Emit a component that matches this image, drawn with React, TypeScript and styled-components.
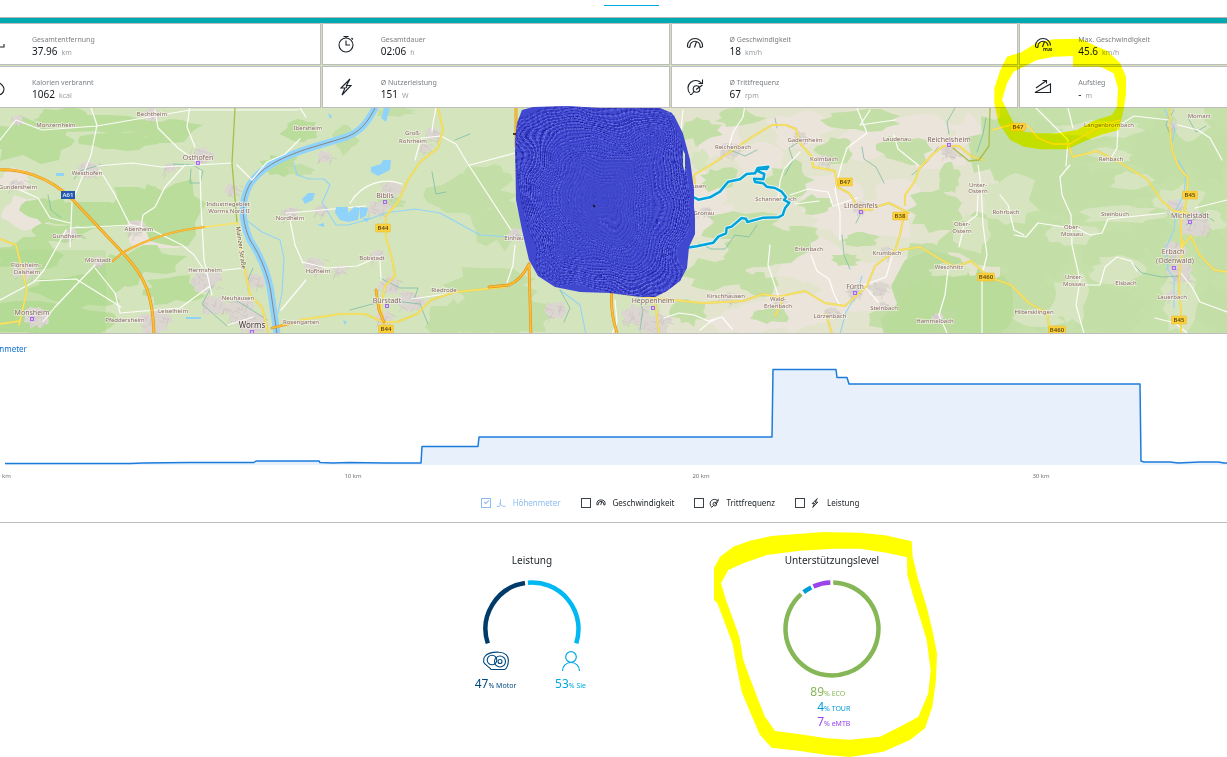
import React from 'react';
import styled, { createGlobalStyle } from 'styled-components';

const GlobalStyle = createGlobalStyle`
  *, *::before, *::after { box-sizing: border-box; }
  body {
    margin: 0;
    background: #fff;
    color: #1c2227;
    font-family: 'Noto Sans', 'Open Sans', sans-serif;
    font-size: 8px;
    line-height: 12px;
    overflow-x: hidden;
  }
`;

const Page = styled.main`
  position: relative;
  min-height: 100vh;
  overflow: hidden;
`;

const Wide = styled.div`
  margin: 0 -140px 0 -27px;
`;

const Header = styled.header`
  display: flex;
  justify-content: center;
  height: 17px;
  padding: 5px 0 0 36px;
`;

const ActiveTab = styled.span`
  width: 55px;
  height: 1px;
  background: #00a8e0;
`;

const TealBar = styled.div`
  height: 6px;
  border-top: 1px solid #b5b5b5;
  background: #00a8b0;
`;

const StatGrid = styled.dl`
  display: grid;
  grid-template-columns: repeat(4, 1fr);
  gap: 1px;
  margin: 0;
  background: #d3e2bd;
`;

const StatTile = styled.div`
  display: flex;
  align-items: center;
  gap: 26px;
  height: 42px;
  padding: 0 14px;
  border: 1px solid #bdbdbd;
  background: #fff;
`;

const StatText = styled.div`
  display: flex;
  flex-direction: column;
  padding-top: 5px;
`;

const StatLabel = styled.dt`
  font-size: 7px;
  line-height: 10px;
  color: #7c8085;
`;

const StatValue = styled.dd`
  margin: 0;
  font-size: 10px;
  line-height: 12px;
  color: #14181c;
`;

const Unit = styled.span`
  margin-left: 4px;
  font-size: 7px;
  color: #9a9ea2;
`;

const MapPanel = styled.section`
  height: 226px;
  border-bottom: 1px solid #bdbdbd;
  background: #d4e5be;
`;

const Drawing = styled.svg`
  display: block;
  width: 100%;
  height: 100%;
`;

const ChartPanel = styled.section`
  border-bottom: 1px solid #bdbdbd;
  padding: 9px 0 13px;
`;

const ChartName = styled.h2`
  margin: 0 0 0 -21px;
  font-size: 8px;
  font-weight: 400;
  line-height: 12px;
  color: #0f6fd1;
`;

const ChartPlot = styled.div`
  height: 128px;
  overflow: hidden;
`;

const Legend = styled.div`
  display: flex;
  justify-content: center;
  gap: 20px;
  margin-top: 14px;
`;

const LegendItem = styled.label<{ $active?: boolean }>`
  display: flex;
  align-items: center;
  color: ${(p) => (p.$active ? '#8dbdf0' : '#1c2227')};
  line-height: 12px;
  svg { margin: 0 7px 0 5px; }
`;

const Check = styled.input`
  appearance: none;
  position: relative;
  width: 10px;
  height: 10px;
  margin: 0;
  border: 1px solid #3a4248;
  background: #fff;
  &:checked { border-color: #8dbdf0; }
  &:checked::after {
    content: '';
    position: absolute;
    left: 2px;
    top: 1px;
    width: 5px;
    height: 3px;
    border: solid #8dbdf0;
    border-width: 0 0 1px 1px;
    transform: rotate(-45deg);
  }
`;

const Rings = styled.section`
  display: flex;
  justify-content: center;
  padding: 31px 0 30px 24px;
`;

const RingCard = styled.article`
  display: flex;
  flex-direction: column;
  align-items: center;
  width: 300px;
`;

const RingTitle = styled.h3`
  margin: 0 0 14px;
  font-size: 10px;
  font-weight: 400;
  line-height: 12px;
`;

const Sources = styled.div`
  display: flex;
  margin-top: -27px;
  padding-left: 2px;
`;

const Source = styled.div<{ $color: string }>`
  display: flex;
  flex-direction: column;
  align-items: center;
  gap: 5px;
  width: 75px;
  color: ${(p) => p.$color};
`;

const Share = styled.span`
  font-size: 12px;
  line-height: 16px;
  white-space: nowrap;
`;

const Small = styled.small`
  font-size: 7px;
`;

const Levels = styled.ul`
  width: 100px;
  margin: 6px 0 0;
  padding: 0;
  list-style: none;
`;

const Level = styled.li<{ $color: string }>`
  display: grid;
  grid-template-columns: 42px 1fr;
  align-items: baseline;
  height: 15px;
  color: ${(p) => p.$color};
  font-size: 12px;
  line-height: 15px;
  span:first-child { text-align: right; }
`;

const Annotation = styled.svg<{ $multiply?: boolean }>`
  position: absolute;
  left: 0;
  top: 0;
  width: 100%;
  height: 757px;
  pointer-events: none;
  mix-blend-mode: ${(p) => (p.$multiply ? 'multiply' : 'normal')};
`;

/* ---------- icons ---------- */

type IconName = 'distance' | 'clock' | 'speed' | 'maxSpeed' | 'flame' | 'bolt' | 'cadence' | 'ascent' | 'height';

const Gauge = () => (
  <path d="M1.500 12V10.500a7.500 7 0 0 1 15 0V12M4 12.500V11a5 4.800 0 0 1 10 0v1.500M8.500 12.500l2-6M1.500 12l2.500.5M14 12.500l2.500-.5" />
);

const icons: Record<IconName, React.ReactNode> = {
  distance: <path d="M2 12h3V8M9 12h7V9M3 5h5" />,
  clock: (
    <>
      <circle cx="9" cy="10" r="7" />
      <path d="M9 5.500V10h4M6.500 1.500h5M9 1.500V3M14.500 3l1.500 1.500" />
    </>
  ),
  speed: <Gauge />,
  maxSpeed: (
    <>
      <path d="M1.500 12V10.500a7.500 7 0 0 1 15 0M4 12.500V11a5 4.800 0 0 1 10 0M8.500 12l2-5.500M1.500 12l2.500.5" />
      <text x="9" y="16" fontSize="5" fontWeight="700" fill="currentColor" stroke="none">max</text>
    </>
  ),
  flame: <path d="M9 1c1 4 7 6 7 10a6 6 0 0 1-12 0c0-2 1-3 2-4 0 2 1 3 2 3 1-3 0-6 1-9Z" />,
  bolt: <path d="M13 1 4 10h4L5 17l9-9.500h-4.500L13 1ZM9 10l1-2" />,
  cadence: (
    <>
      <path d="M4 15.500A7.700 7.700 0 1 1 15.500 5M16.500 1.500V5.500h-4" />
      <circle cx="10.500" cy="11" r="3.300" />
      <path d="M8 13.500l-2.500 3H4M10 11.500 16.500 7" />
    </>
  ),
  ascent: <path d="M1 14.500h15.500V6L1 14.500ZM2 10l10.500-7.500M8.500 2.500h4v3" />,
  height: <path d="M1 15h5l2-4V2M8 11l2 3h2l1 1h4M6 9l2 2" />,
};

const Icon = ({ name, size = 18 }: { name: IconName; size?: number }) => (
  <svg
    width={size}
    height={size}
    viewBox="0 0 18 18"
    fill="none"
    stroke="currentColor"
    strokeWidth={size > 12 ? 1.1 : 1.6}
    aria-hidden="true"
  >
    {icons[name]}
  </svg>
);

const MotorIcon = () => (
  <svg width="26" height="20" viewBox="0 0 26 20" fill="none" stroke="currentColor" strokeWidth="1.100" aria-hidden="true">
    <path d="M1.500 6C4 2 10 1 16 1.200C22 1.200 25.500 5 25.400 9.500C25.300 13 24 18 21.500 18.500H8C6 15.500 2 14 .8 11.500C.5 9 .8 7 1.500 6Z" />
    <circle cx="9" cy="9" r="4.800" />
    <circle cx="17" cy="10.500" r="5.500" />
    <circle cx="17" cy="10.500" r="2" />
  </svg>
);

const RiderIcon = () => (
  <svg width="20" height="20" viewBox="0 0 20 20" fill="none" stroke="currentColor" strokeWidth="1.200" aria-hidden="true">
    <circle cx="10" cy="6" r="5.300" />
    <path d="M1.500 20c0-5 3.500-8.500 8.500-8.500s8.500 3.500 8.500 8.500" />
  </svg>
);

/* ---------- map ---------- */

const seeded = (seed: number) => () => {
  seed = (seed * 16807 + 11) % 2147483647;
  return seed / 2147483647;
};

const blobPath = (cx: number, cy: number, rx: number, ry: number, seed: number) => {
  const rnd = seeded(seed * 7919 + 3);
  rnd();
  const n = 18;
  let d = '';
  for (let i = 0; i < n; i++) {
    const a = (i / n) * Math.PI * 2;
    const k = 0.6 + rnd() * 0.5;
    d += `${i ? 'L' : 'M'}${Math.round(cx + Math.cos(a) * rx * k)} ${Math.round(cy + Math.sin(a) * ry * k)}`;
  }
  return d + 'Z';
};

type Blob = [number, number, number, number];

const Blobs = ({ items, fill, seed = 1 }: { items: Blob[]; fill: string; seed?: number }) => (
  <>
    {items.map(([x, y, rx, ry], i) => (
      <path key={i} d={blobPath(x, y, rx, ry, seed + i)} fill={fill} />
    ))}
  </>
);

const Town = ({ x, y, r, seed }: { x: number; y: number; r: number; seed: number }) => {
  const rnd = seeded(seed * 104729 + 5);
  rnd();
  let streets = '';
  for (let i = 0; i < r; i++) {
    const px = x + (rnd() - 0.5) * r * 1.5;
    const py = y + (rnd() - 0.5) * r * 1.1;
    const flip = rnd() > 0.5;
    const len = 3 + rnd() * 4;
    streets += `M${px.toFixed(1)} ${py.toFixed(1)}l${flip ? len.toFixed(1) : '-2'} ${flip ? '2' : len.toFixed(1)}`;
  }
  return (
    <g>
      <path d={blobPath(x, y, r * 0.9, r * 0.7, seed)} fill="#dcd6d0" />
      <path d={streets} fill="none" stroke="#c9c1c0" strokeWidth=".6" />
    </g>
  );
};

const darkForest: Blob[] = [
  [30, 140, 60, 24], [62, 117, 36, 9], [100, 124, 60, 10], [165, 130, 40, 14], [120, 140, 40, 12], [100, 215, 60, 14],
  [168, 215, 44, 38], [48, 210, 30, 14], [30, 255, 40, 18], [80, 290, 60, 20], [50, 320, 70, 22], [150, 262, 36, 16],
  [172, 290, 34, 16], [115, 272, 30, 20], [60, 232, 34, 10], [280, 165, 22, 12], [300, 130, 20, 12], [135, 200, 26, 20],
];
const midForest: Blob[] = [
  [470, 195, 50, 22], [500, 225, 30, 26], [490, 285, 54, 20], [500, 315, 60, 26], [450, 320, 24, 20], [300, 170, 14, 7],
  [390, 203, 18, 6], [395, 112, 22, 6], [345, 140, 14, 16], [490, 180, 26, 20], [700, 130, 24, 16], [740, 118, 26, 10],
  [720, 180, 22, 14], [740, 225, 46, 16], [760, 250, 52, 26], [720, 275, 40, 18], [690, 312, 20, 14], [760, 285, 20, 12],
  [860, 120, 40, 12], [835, 150, 22, 14], [905, 150, 30, 16], [935, 210, 30, 22], [985, 240, 50, 30], [930, 260, 26, 26],
  [1000, 150, 34, 36], [1040, 180, 50, 40], [1060, 140, 60, 26], [1110, 190, 52, 22], [1165, 150, 40, 36], [1210, 150, 26, 40],
  [1040, 250, 40, 36], [1020, 300, 46, 40], [1110, 250, 40, 24], [1110, 310, 44, 28], [1150, 230, 26, 30], [1215, 250, 22, 26],
  [1215, 310, 30, 26], [790, 180, 26, 20], [800, 235, 22, 10], [815, 205, 18, 10], [900, 320, 30, 16], [945, 300, 36, 34],
  [985, 320, 40, 24], [1080, 205, 30, 16], [860, 240, 20, 8], [845, 260, 16, 8], [770, 315, 20, 10], [950, 180, 12, 18],
];
const deepForest: Blob[] = [[925, 305, 30, 30], [960, 290, 34, 26], [985, 310, 36, 40], [905, 325, 24, 18]];
const fields: Blob[] = [
  [700, 200, 26, 40], [720, 140, 26, 22], [760, 160, 30, 18], [800, 130, 34, 24], [870, 140, 44, 22], [935, 150, 40, 24],
  [830, 190, 34, 20], [860, 220, 60, 26], [900, 200, 34, 20], [810, 260, 46, 26], [860, 290, 60, 34], [800, 310, 50, 26],
  [750, 320, 40, 20], [720, 215, 26, 12], [900, 270, 34, 20], [920, 125, 44, 12], [970, 130, 14, 18], [30, 212, 30, 18],
  [160, 240, 34, 9], [15, 180, 20, 12],
];
const pale: Blob[] = [
  [1010, 200, 30, 28], [970, 235, 22, 22], [1070, 235, 32, 12], [1120, 215, 46, 10], [1100, 130, 50, 10], [1070, 300, 22, 30],
  [1115, 270, 30, 14], [1180, 300, 22, 34], [1190, 120, 20, 20], [1130, 180, 24, 10], [1180, 200, 26, 18], [1040, 318, 26, 10],
  [950, 270, 22, 8], [700, 160, 10, 12], [1210, 220, 18, 12], [1110, 155, 24, 8],
];
const towns: [number, number, number][] = [
  [90, 170, 14], [202, 156, 14], [170, 168, 8], [17, 185, 9], [70, 235, 9], [135, 228, 12], [98, 262, 9], [25, 270, 14], [38, 318, 16],
  [205, 280, 18], [215, 305, 16], [240, 310, 20], [155, 322, 20], [255, 322, 18], [232, 190, 10], [255, 280, 12], [290, 213, 10],
  [433, 135, 10], [425, 148, 8], [392, 190, 14], [378, 208, 14], [322, 210, 9], [315, 266, 13], [340, 270, 8], [378, 255, 9],
  [390, 285, 14], [410, 300, 16], [385, 318, 10], [515, 235, 10], [555, 310, 14], [635, 315, 18], [655, 325, 20], [730, 150, 12],
  [705, 212, 8], [727, 298, 9], [660, 270, 10], [800, 137, 9], [825, 160, 8], [860, 207, 9], [950, 152, 12], [885, 252, 8],
  [855, 292, 10], [878, 288, 12], [832, 312, 9], [884, 306, 6], [938, 318, 8], [1175, 205, 10], [1196, 225, 20], [1180, 272, 18],
  [1175, 250, 14], [1172, 295, 7], [1172, 125, 7], [779, 303, 7], [325, 156, 9], [18, 120, 8], [152, 114, 10],
];

const whiteRoads = [
  'M0 140L16 120L42 130L97 126L190 110L298 110M90 105l7 20-6 30-10 25-9 22-2 45M97 166l35-3 30 4 70-4M155 110l3 18 20 20 22 16M100 170l15 25 15 30M185 165l-20 22-10 20-12 8-2 12',
  'M20 190l18 8 12 20 20 5M70 228l62-3 20 5 30 15 12 10 12 18M200 170l1 35 3 55 8 35M190 105l-3 22 8 20M66 230l-22 40-10 12M34 281l42-2 45 28M95 265l-40 42-12 15M95 268l20 25 5 20M120 313l60-5 30-22M205 272l40-4M0 300l34-18',
  'M237 165l15 15 15-18 18-8 15-15M290 220l5 25 8 18M286 213l25-2 55-5M350 203c12-20 35-26 52-19M302 262l25 6 30-2 24-10M281 310l25-30M298 105l8 12M436 108l-3 15-1 8M415 160l6-22 20-2 15 8 12 20 43 66M470 165l45-12M515 245l-2 20-6 18M412 299l40-6M380 260l1 20',
  'M745 105l-2 12-10 15-4 15M683 110l-2 20-1 30M800 152l-16 17-4 12-2 18M857 108l10 25-20 15-6 18-6 24 5 22v28M790 195l18-6 20 3 5 14 24-8M894 135l4 14 20 16M870 110l-10 15 35-5',
  'M811 255l6 16 12 8 5 15 6 12M864 285l22-8 6-20M866 288l12 14M795 204l24-3M948 270l-3 25-6 20 8 18M978 195l-1 20-13 10-5 22M1000 195l8 10 6 25 10 5M978 165l3 20 2 40 4 30-5 20v60',
  'M1014 235l12 2 12-14 40 6 12 6 12-2 6-14 58-6M1070 165l-10 12 2 18 9 20 1 30 8 35-4 25 14 50M1072 285h28l5-18 12-10 14 4 6 10M1036 108l10 10 22 22-2 26M1068 108l5 20M1110 160l7-12 1-22 16-10 35 4M1178 125l20 5 12 8 12 22',
  'M1195 208l32-8M1180 272l12 15 8 15 27 10M1155 318l20 5 12 10M664 318l15-5 15 2 14 6 14-4 10 12M770 245l-2 20 5 15 5 15M700 330l10-8 8-4M615 300l2 22-5 12M228 325l25-8',
];
const yellowRoads = [
  'M0 239l16 6 5 20 6 25-8 35M242 255l8 40 12 12 6 25M438 108l5 22-5 18-18 14-12 18-10 22-12 14v22l6 20 3 18-10 10-4 22 3 16 6 10M300 320l40-6 25 0 18 8 14 0 20-8 14-14 24-8 50-5',
  'M695 185l-1-10 20-12 20-14 18-12 20-12 14 0 10 4 4 14 12 14 1 10 12 2 10 2 2 16 12 6 12 18 8-2 20-6 20 10M860 207l12 3',
  'M905 205l0-10 10-14 4-12 14-15 10-8 16 0 12 10 12 4M992 130l22-6 14 2 10 12 14 6 18 0 30-18 20-6M903 220l-3 15-5 16-20 15-8 20-22 20-20-3-20-12-28 6M900 250l20-3 20 12 15 8 16-6 18 16 22 8 18 18 18 10 3 20',
  'M1068 145l5 12 24-6 20 10 30 18 15 22 12 10 14 2M1170 105v25l2 20 6 16 10 12-2 25-5 20v25l10-12 8 18 15 16 15 2M1183 240l-3 25-1 25 2 20 0 24M610 290l15 4 28 4 20 2 30 3 40-2 20-7 20 4-8 18M655 300l4 33M0 324l20-3',
  'M826 314l6 20',
];
const streams = [
  'M100 165l-20 6-6 8M173 164l20 1 10 6-3 12-10 0 1-14M48 195l3 15 10 8M212 286l-10 18 25 22M232 298l20 12 15 10M253 268l-6 14M455 140l15-6M432 172l4 22 10-2M380 278l20 10 18 0-4 12M385 300l35 4 8 20M350 310l30-8M560 290l10 18-6 14',
  'M730 150l15 6 12-6M757 225l-8 12-14-2-10 14-14 0-12-6M785 175l8-15-4-12 10-6M775 118l2 10M862 147l2 12 12 8 8 16M912 175l14-12 12-16M955 108l-8 14 2 12M986 118l-3 16-6 18M842 235l2 20 6 14M856 223l6-12M1134 265l8 8 20 4 18-1',
  'M1174 110l-8 14 6 16M1188 118l8 14 10-6M1185 215l6 10M1186 225l16-12 12 8M635 290l8 20-3 20',
];
const creeks = [
  'M246 220l16 12 18 8 4 18-2 35-4 20M294 163l3 12 12 4 15 0 6 6-8 18 14 22 12 0 22-6 15-6 30-4 25 4 40 22 30 2 18 0M560 290l20 15 6 30M840 334l6-22 10-16 6-20M1178 160l8 14-2 20-8 16-2 20-8 18 2 22 6 8 0 30M1165 110l10 20-4 16',
];
const rhine =
  'M376 106C368 122 360 134 340 139L310 148C285 156 262 166 250 184C240 202 242 222 250 240C262 258 270 280 272 300L278 340';

interface MapLabel { x: number; y: number; t: string; s?: number; c?: string; r?: number }
const labels: MapLabel[] = [
  { x: 152, y: 116, t: 'Bechtheim' }, { x: 56, y: 127, t: 'Monzernheim' }, { x: 198, y: 160, t: 'Osthofen', s: 7 },
  { x: 87, y: 175, t: 'Westhofen' }, { x: 18, y: 189, t: 'Gundersheim' }, { x: 228, y: 206, t: 'Industriegebiet' },
  { x: 229, y: 213, t: 'Worms Nord II' }, { x: 290, y: 220, t: 'Nordheim' }, { x: 67, y: 238, t: 'Gundheim' },
  { x: 139, y: 231, t: 'Abenheim' }, { x: 98, y: 262, t: 'Mörstadt' }, { x: 26, y: 267, t: 'Flörsheim-' },
  { x: 27, y: 274, t: 'Dalsheim' }, { x: 205, y: 272, t: 'Herrnsheim' }, { x: 32, y: 315, t: 'Monsheim', s: 7 },
  { x: 125, y: 322, t: 'Pfeddersheim' }, { x: 173, y: 313, t: 'Leiselheim' }, { x: 238, y: 300, t: 'Neuhausen' },
  { x: 252, y: 328, t: 'Worms', s: 8, c: '#463c3c' }, { x: 301, y: 324, t: 'Rosengarten' },
  { x: 239, y: 248, t: 'Mainzer Straße', c: '#5b5530', r: 82 },
  { x: 308, y: 130, t: 'Ibersheim' }, { x: 413, y: 135, t: 'Groß-' }, { x: 413, y: 143, t: 'Rohrheim' },
  { x: 385, y: 198, t: 'Biblis', s: 7 }, { x: 372, y: 260, t: 'Bobstadt' }, { x: 318, y: 273, t: 'Hofheim' },
  { x: 387, y: 303, t: 'Bürstadt', s: 7 }, { x: 444, y: 292, t: 'Riedrode' }, { x: 519, y: 240, t: 'Einhausen' },
  { x: 422, y: 338, t: 'Boxheimerhof' }, { x: 733, y: 149, t: 'Reichenbach' }, { x: 689, y: 188, t: 'Elmshausen' },
  { x: 704, y: 215, t: 'Gronau' }, { x: 776, y: 201, t: 'Schannenbach' }, { x: 653, y: 303, t: 'Heppenheim', s: 7 },
  { x: 726, y: 298, t: 'Kirschhausen' }, { x: 778, y: 301, t: 'Wald-' }, { x: 778, y: 308, t: 'Erlenbach' },
  { x: 805, y: 142, t: 'Gadernheim' }, { x: 824, y: 161, t: 'Kolmbach' }, { x: 897, y: 141, t: 'Laudenau' },
  { x: 949, y: 142, t: 'Reichelsheim', s: 7 }, { x: 861, y: 208, t: 'Lindenfels', s: 7 }, { x: 978, y: 187, t: 'Unter-' },
  { x: 978, y: 193, t: 'Ostern' }, { x: 1006, y: 214, t: 'Rohrbach' }, { x: 962, y: 226, t: 'Ober-' },
  { x: 962, y: 233, t: 'Ostern' }, { x: 809, y: 251, t: 'Erlenbach' }, { x: 887, y: 255, t: 'Krumbach' },
  { x: 949, y: 269, t: 'Weschnitz' }, { x: 855, y: 289, t: 'Fürth', s: 7 }, { x: 884, y: 310, t: 'Steinbach' },
  { x: 830, y: 318, t: 'Lörzenbach' }, { x: 935, y: 323, t: 'Hammelbach' }, { x: 1109, y: 127, t: 'Langenbrombach' },
  { x: 1199, y: 118, t: 'Momart' }, { x: 1111, y: 161, t: 'Rehbach' }, { x: 1190, y: 218, t: 'Michelstadt', s: 7 },
  { x: 1115, y: 216, t: 'Steinbuch' }, { x: 1072, y: 229, t: 'Ober-' }, { x: 1072, y: 236, t: 'Mossau' },
  { x: 1173, y: 254, t: 'Erbach', s: 7 }, { x: 1175, y: 263, t: '(Odenwald)', s: 7 }, { x: 1074, y: 279, t: 'Unter-' },
  { x: 1074, y: 286, t: 'Mossau' }, { x: 1126, y: 285, t: 'Elsbach' }, { x: 1172, y: 299, t: 'Lauerbach' },
  { x: 1034, y: 314, t: 'Hiltersklingen' },
];
const shields: [number, number, string][] = [
  [383, 228, 'B44'], [386, 329, 'B44'], [845, 182, 'B47'], [900, 216, 'B38'], [986, 277, 'B460'], [1018, 127, 'B47'],
  [1190, 195, 'B45'], [1179, 320, 'B45'], [1057, 330, 'B460'],
];
const centres = [[198, 163], [32, 319], [252, 332], [385, 202], [387, 306], [653, 308], [949, 145], [861, 212], [855, 293], [1190, 222], [1174, 268]];

/* The tour is plotted at three units per map pixel. */
const tour =
  'M540 295L580 291L595 299L630 292L660 275L685 245L720 238L740 222L765 220L773 204L805 200L800 207L778 206L775 214L793 222L790 238L762 236L765 246L790 250L800 260L825 264L845 275L858 292L852 300L868 308L855 325L848 345L835 352L790 353L742 366L738 356L725 354L695 380L680 384L678 400L655 410L640 428L590 439L560 443';

const RegionMap = () => (
  <Drawing viewBox="0 108 1227 225" preserveAspectRatio="xMidYMid slice" role="img" aria-label="Karte der Tour">
    <rect x="-400" y="0" width="2100" height="500" fill="#d4e5be" />
    <rect x="660" y="100" width="340" height="240" fill="#e2e4cd" />
    <rect x="1000" y="100" width="240" height="240" fill="#c6e0aa" />
    <Blobs items={fields} fill="#ebe4db" seed={10} />
    <Blobs items={darkForest} fill="#badd9c" seed={40} />
    <Blobs items={midForest} fill="#c3dfa7" seed={70} />
    <path d="M905 260l25-10 30 8 10 18 32 2v60H885l-4-20 16-14-6-18Z" fill="#bbdc9e" />
    <Blobs items={deepForest} fill="#b9dc9b" seed={140} />
    <Blobs items={pale} fill="#d6e5c0" seed={160} />
    <path d="M0 250h106v83H0Z" fill="#a9d88a" opacity=".35" />
    {towns.map(([x, y, r], i) => (
      <Town key={i} x={x} y={y} r={r} seed={i + 1} />
    ))}
    <g fill="none" strokeLinejoin="round" strokeLinecap="round">
      {creeks.map((d) => <path key={d} d={d} stroke="#93d3f7" strokeWidth="1.100" />)}
      {streams.map((d) => <path key={d} d={d} stroke="#7cbda6" strokeWidth=".8" />)}
      <path d={rhine} stroke="#90d4fb" strokeWidth="7" />
      <path d={rhine} stroke="#8c8480" strokeWidth="1" />
      {whiteRoads.map((d) => <path key={d} d={d} stroke="#fdfcfa" strokeWidth="1.200" />)}
      {yellowRoads.map((d) => <path key={d} d={d} stroke="#e3cf55" strokeWidth="2" />)}
      {yellowRoads.map((d) => <path key={d} d={d} stroke="#fae364" strokeWidth="1.300" />)}
      <path d="M235 108l-3 55 5 60M990 108l-1 38-10 14-10 1-16-13" stroke="#a9bd4c" strokeWidth="1.300" />
      <path d="M237 223l1 14 4 20" stroke="#fae364" strokeWidth="1.600" />
      {['#e2951d', '#fdbf35'].map((c, i) => (
        <g key={c} stroke={c}>
          <path d="M-5 170C20 168 48 176 72 199L122 252C145 276 154 295 154 340" strokeWidth={i ? 1.8 : 3} />
          <path d="M113 261l9-8C145 240 175 230 205 227" strokeWidth={i ? 1.3 : 2.2} />
          <path
            d="M516 106v40M529 264l2 72M529 264c-6 12-12 18-20 21l-20 2M612 290c-2 20 2 34 6 46M376 290l3 20 5 12M272 328l20-5"
            strokeWidth={i ? 1.6 : 2.8}
          />
        </g>
      ))}
      <path d="M205 227l32-4" stroke="#fae364" strokeWidth="1.600" />
    </g>
    <g fill="#8fd3fb">
      <path d="M371 167l10-3 2-4 8 0-1 10-8 4-4 2-7-4ZM336 207l12 0 0 6 6-6 6 1-2 12-10 2-8-2-5-7ZM360 207l8 1-2 8-6 3ZM302 199l6-6 7 0-2 7-8 4ZM362 219l8-2-3 5ZM317 225l7-2 0 4ZM328 113l4 3-2 3ZM384 106l6 2-4 14-5-4 2-5ZM343 320l4 2-2 3Z" />
      <path d="M56 173h8v3h-8ZM186 317h15v2h-15Z" />
    </g>
    {centres.map(([x, y]) => (
      <rect key={`${x}-${y}`} x={x - 1.5} y={y - 1.5} width="3" height="3" fill="#d7c2f5" stroke="#a45cf0" strokeWidth=".9" />
    ))}
    <g
      fontFamily="Noto Sans, sans-serif"
      textAnchor="middle"
      stroke="#f6f3ec"
      strokeWidth="1.600"
      strokeOpacity=".75"
      paintOrder="stroke"
    >
      {labels.map((l) => (
        <text
          key={`${l.x}-${l.y}`}
          x={l.x}
          y={l.y}
          fontSize={l.s ?? 6}
          fill={l.c ?? '#846a62'}
          transform={l.r ? `rotate(${l.r} ${l.x} ${l.y})` : undefined}
        >
          {l.t}
        </text>
      ))}
    </g>
    <g transform="translate(500 100) scale(.33333)" fill="none" strokeLinejoin="round" strokeLinecap="round">
      <path d={tour} stroke="#e8f6f4" strokeWidth="13" />
      <path d={tour} stroke="#00a3da" strokeWidth="7.500" />
    </g>
    <g fontFamily="Noto Sans, sans-serif" fontSize="6" fontWeight="600" textAnchor="middle">
      {shields.map(([x, y, t]) => {
        const w = t.length > 3 ? 17 : 15;
        return (
          <g key={`${x}-${y}`}>
            <rect x={x - w / 2} y={y - 4} width={w} height="8" rx="1" fill="#fcd13c" stroke="#e8b92d" strokeWidth=".5" />
            <text x={x} y={y + 2} fill="#5c4a14">{t}</text>
          </g>
        );
      })}
      <rect x="61" y="191" width="14" height="8" fill="#2456ad" />
      <text x="68" y="197" fill="#dce7fa">A61</text>
    </g>
  </Drawing>
);

/* ---------- elevation chart ---------- */

const profile =
  'M5 108.500L130 108.500L143 108L189 107.500L254 107.500L256 106L319 106L320 107.500L333 108L349 107.500L386 108L421 108L422 91.500L478 91.500L479 82L772 82L773 14.500L836 14.500L837 22.500L847 22.500L849 29L1140 29L1141 106L1144 107L1170 107L1178 108L1200 107L1218 107L1224 108L1500 108';

const ElevationChart = () => (
  <Drawing viewBox="0 0 1227 128" preserveAspectRatio="xMidYMid slice" role="img" aria-label="Höhenprofil">
    <path d={`${profile}V110H5Z`} fill="#e7f0fb" />
    <path d={profile} fill="none" stroke="#1c7cdc" strokeWidth="1.500" strokeLinejoin="round" />
    <g fontFamily="Noto Sans, sans-serif" fontSize="6" fill="#6d7276" textAnchor="middle">
      <text x="4" y="123">0 km</text>
      <text x="353" y="123">10 km</text>
      <text x="701" y="123">20 km</text>
      <text x="1041" y="123">30 km</text>
    </g>
  </Drawing>
);

/* ---------- rings ---------- */

interface Segment { from: number; to: number; color: string }

const arc = (from: number, to: number) => {
  const point = (deg: number) => {
    const a = (deg * Math.PI) / 180;
    return `${(49 + 46.5 * Math.sin(a)).toFixed(2)} ${(49 - 46.5 * Math.cos(a)).toFixed(2)}`;
  };
  return `M${point(from)}A46.5 46.5 0 ${to - from > 180 ? 1 : 0} 1 ${point(to)}`;
};

const Ring = ({ segments }: { segments: Segment[] }) => (
  <svg width="98" height="98" viewBox="0 0 98 98" fill="none" strokeWidth="4.500" aria-hidden="true">
    {segments.map((s) => (
      <path key={s.color} d={arc(s.from, s.to)} stroke={s.color} />
    ))}
  </svg>
);

/* ---------- hand-drawn marks ---------- */

const blueShape =
  'M522 110L533 107L568 106L600 108L660 108L672 113L680 132L688 158L691 185L695 215L695 234L689 247L687 268L680 281L667 291L655 297L640 297L610 293L580 292L555 287L538 276L529 260L522 230L516 200L515 140L517 123Z';

const BlueScribble = () => {
  const rnd = seeded(4242);
  rnd();
  const rings: { k: number; dash: string; o: number }[] = [];
  for (let k = 0.985; k > 0.03; k -= 0.032) {
    rings.push({ k, dash: `${(1 + rnd() * 3).toFixed(1)} ${(0.8 + rnd() * 2).toFixed(1)}`, o: 0.35 + rnd() * 0.45 });
  }
  return (
    <Annotation viewBox="0 0 1227 757" preserveAspectRatio="xMidYMin slice" aria-hidden="true">
      <defs>
        <clipPath id="blue-clip"><path d={blueShape} /></clipPath>
        <filter id="wobble" x="-5%" y="-5%" width="110%" height="110%">
          <feTurbulence type="fractalNoise" baseFrequency=".018" numOctaves="2" seed="8" />
          <feDisplacementMap in="SourceGraphic" scale="40" xChannelSelector="R" yChannelSelector="G" />
        </filter>
      </defs>
      <path d={blueShape} fill="#4048d0" />
      <g clipPath="url(#blue-clip)">
        <g filter="url(#wobble)" fill="none">
          {rings.map(({ k, dash, o }) => (
            <g key={k} transform={`translate(${605 * (1 - k)} ${200 * (1 - k)}) scale(${k})`}>
              <path d={blueShape} stroke="#14148c" strokeWidth={1.1 / k} strokeDasharray={dash} strokeOpacity={o} />
              <path
                d={blueShape}
                stroke="#8a92f6"
                strokeWidth={0.9 / k}
                strokeDasharray={dash}
                strokeOpacity={o * 0.9}
                transform="translate(1.500 1.500)"
              />
            </g>
          ))}
        </g>
      </g>
      <path d="M672 116L681 134L688 160L692 190L692 232" fill="none" stroke="#4048d0" strokeWidth="4" />
      <path d="M683 150l2 4 0 18-2-6Z" fill="#d4e5be" />
      <path d="M513 134h3M593 205l2 2" stroke="#111" strokeWidth="1.500" />
    </Annotation>
  );
};

const YellowMarks = () => (
  <Annotation $multiply viewBox="0 0 1227 757" preserveAspectRatio="xMidYMin slice" fill="#ff0" fillRule="evenodd" aria-hidden="true">
    <path
      transform="translate(807 0) scale(.33333)"
      d="M600 170L640 158L690 128L740 118L820 116L860 135L900 152L940 190L957 230L957 280L950 330L935 390L880 405L830 425L780 448L700 448L650 440L610 420L575 370L562 310L562 265L580 210ZM620 215L650 200L690 180L740 170L798 168L798 200L880 200L920 220L933 265L930 320L915 345L860 362L810 390L750 400L690 400L650 395L620 370L600 330L585 300L600 250Z"
    />
    <path
      transform="translate(700 520) scale(.33333)"
      d="M42 145L60 110L100 80L150 62L215 48L370 36L480 38L555 46L635 64L638 110L655 180L680 260L697 330L711 400L708 480L697 560L675 625L630 660L550 695L450 711L380 705L300 693L215 683L180 645L150 575L125 515L110 440L97 370L75 310L52 250L42 240ZM63 190L85 150L130 130L200 105L300 92L400 86L480 86L560 98L621 112L622 165L640 230L665 310L680 360L692 450L685 520L655 590L610 615L540 650L450 659L380 655L300 643L225 633L195 590L175 540L150 475L130 420L118 350L100 300L78 240Z"
    />
  </Annotation>
);

/* ---------- page ---------- */

const stats: { icon: IconName; label: string; value: string; unit: string }[] = [
  { icon: 'distance', label: 'Gesamtentfernung', value: '37.96', unit: 'km' },
  { icon: 'clock', label: 'Gesamtdauer', value: '02:06', unit: 'h' },
  { icon: 'speed', label: 'Ø Geschwindigkeit', value: '18', unit: 'km/h' },
  { icon: 'maxSpeed', label: 'Max. Geschwindigkeit', value: '45.6', unit: 'km/h' },
  { icon: 'flame', label: 'Kalorien verbrannt', value: '1062', unit: 'kcal' },
  { icon: 'bolt', label: 'Ø Nutzerleistung', value: '151', unit: 'W' },
  { icon: 'cadence', label: 'Ø Trittfrequenz', value: '67', unit: 'rpm' },
  { icon: 'ascent', label: 'Aufstieg', value: '-', unit: 'm' },
];

const series: { icon: IconName; label: string; active?: boolean }[] = [
  { icon: 'height', label: 'Höhenmeter', active: true },
  { icon: 'speed', label: 'Geschwindigkeit' },
  { icon: 'cadence', label: 'Trittfrequenz' },
  { icon: 'bolt', label: 'Leistung' },
];

const levels = [
  { share: 89, name: 'ECO', color: '#86b756' },
  { share: 4, name: 'TOUR', color: '#009ed6' },
  { share: 7, name: 'eMTB', color: '#9a45ec' },
];

export default function App() {
  return (
    <Page>
      <GlobalStyle />
      <Header><ActiveTab /></Header>
      <TealBar />
      <Wide>
        <StatGrid>
          {stats.map((s) => (
            <StatTile key={s.label}>
              <Icon name={s.icon} />
              <StatText>
                <StatLabel>{s.label}</StatLabel>
                <StatValue>{s.value}<Unit>{s.unit}</Unit></StatValue>
              </StatText>
            </StatTile>
          ))}
        </StatGrid>
      </Wide>
      <MapPanel><RegionMap /></MapPanel>
      <ChartPanel>
        <ChartName>Höhenmeter</ChartName>
        <ChartPlot><ElevationChart /></ChartPlot>
        <Wide>
          <Legend>
            {series.map((s) => (
              <LegendItem key={s.label} $active={s.active}>
                <Check type="checkbox" defaultChecked={s.active} disabled={s.active} />
                <Icon name={s.icon} size={10} />
                {s.label}
              </LegendItem>
            ))}
          </Legend>
        </Wide>
      </ChartPanel>
      <Wide>
        <Rings>
          <RingCard>
            <RingTitle>Leistung</RingTitle>
            <Ring segments={[{ from: -108, to: -8.7, color: '#003b6a' }, { from: -5, to: 108, color: '#00b9f2' }]} />
            <Sources>
              <Source $color="#00497f">
                <MotorIcon />
                <Share>47<Small>% Motor</Small></Share>
              </Source>
              <Source $color="#00a8e0">
                <RiderIcon />
                <Share>53<Small>% Sie</Small></Share>
              </Source>
            </Sources>
          </RingCard>
          <RingCard>
            <RingTitle>Unterstützungslevel</RingTitle>
            <Ring
              segments={[
                { from: 1.5, to: 318.5, color: '#86b756' },
                { from: 322.5, to: 333.5, color: '#009ed6' },
                { from: 336.5, to: 358, color: '#9a45ec' },
              ]}
            />
            <Levels>
              {levels.map((l) => (
                <Level key={l.name} $color={l.color}>
                  <span>{l.share}</span>
                  <Small>% {l.name}</Small>
                </Level>
              ))}
            </Levels>
          </RingCard>
        </Rings>
      </Wide>
      <BlueScribble />
      <YellowMarks />
    </Page>
  );
}
